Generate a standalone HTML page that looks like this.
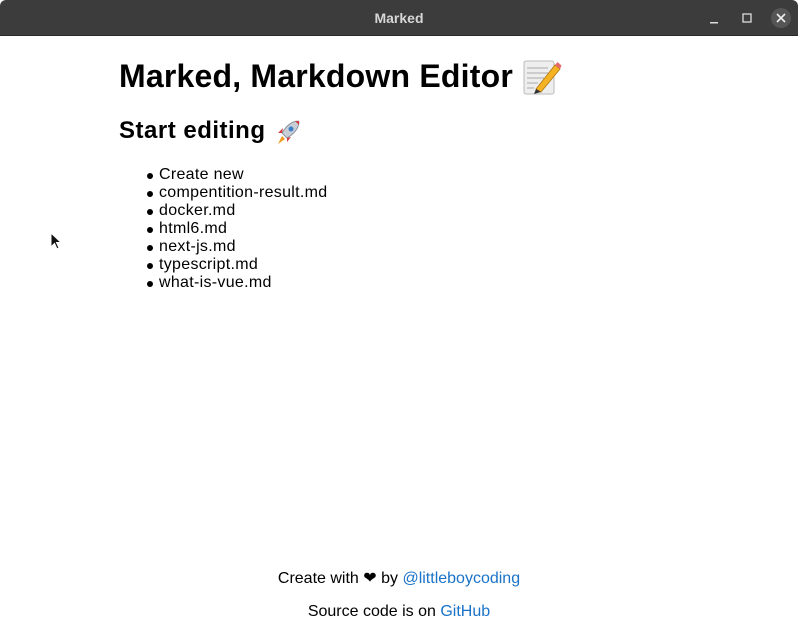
<!DOCTYPE html>
<html><head><meta charset="utf-8"><style>
*{margin:0;padding:0;box-sizing:border-box}
html,body{width:798px;height:636px;overflow:hidden;background:#fff;font-family:"Liberation Sans",sans-serif;color:#000}
.bar{position:absolute;left:0;top:0;width:798px;height:36px;background:#3c3c3c;border-bottom:1px solid #2a2a2a;border-radius:6px 6px 0 0}
.bar .t{position:absolute;left:0;right:0;top:10px;text-align:center;color:#d6d6d6;font-size:14px;font-weight:bold}
.a{position:absolute;white-space:nowrap}
h1{font-size:32px;font-weight:bold;letter-spacing:0.2px}
h2{font-size:24px;font-weight:bold;letter-spacing:0.5px}
ul{list-style:none}
li{font-size:16px;line-height:18px;position:relative;letter-spacing:0.3px}
li:before{content:"";position:absolute;left:-12px;top:7px;width:6px;height:6px;border-radius:50%;background:#000}
.f{position:absolute;left:0;width:798px;text-align:center;font-size:16px}
a{color:#1a73c8;text-decoration:none}
</style></head><body>
<div class="bar"><div class="t">Marked</div>
<svg style="position:absolute;left:700px;top:8px" width="98" height="22">
<rect x="10" y="14" width="8" height="1.5" fill="#ddd"/>
<rect x="43" y="6" width="8" height="8" fill="none" stroke="#ddd" stroke-width="1.3"/>
<circle cx="81" cy="10" r="10" fill="#555"/>
<path d="M77 6L85 14M85 6L77 14" stroke="#eee" stroke-width="1.6"/>
</svg></div>
<div class="a" style="left:119px;top:58px"><h1>Marked, Markdown Editor</h1></div>
<svg class="a" style="left:522px;top:59px" width="40" height="36" viewBox="0 0 40 36">
<rect x="2" y="2" width="30" height="33" rx="2" fill="#eee" stroke="#bbb"/>
<g stroke="#aaa" stroke-width="1"><line x1="5" y1="9" x2="26" y2="9"/><line x1="5" y1="14" x2="26" y2="14"/><line x1="5" y1="19" x2="22" y2="19"/><line x1="5" y1="24" x2="16" y2="24"/><line x1="5" y1="29" x2="12" y2="29"/></g>
<path d="M14 30L33 6L38 10L19 33Z" fill="#f5b324" stroke="#b07810" stroke-width="0.8"/>
<path d="M33 6L35.5 3L39.5 6.5L38 10Z" fill="#e86a6a"/>
<path d="M14 30L19 33L12 35Z" fill="#333"/>
</svg>
<div class="a" style="left:119px;top:117px"><h2>Start editing</h2></div>
<svg class="a" style="left:274px;top:119px" width="28" height="26" viewBox="0 0 28 26">
<path d="M24 2C18 2 12 7 8 14L13 19C20 15 25 9 25 3Z" fill="#c8ced6" stroke="#7a8592" stroke-width="0.8"/>
<circle cx="17" cy="10" r="2.5" fill="#3b7ec8"/>
<path d="M21 2L25 2L25 6Z" fill="#d63b3b"/>
<path d="M8 14L4 14L9 9Z M13 19L13 23L17 18Z" fill="#d63b3b"/>
<path d="M8 17L11 20L4 25Z" fill="#f59a1c"/>
</svg>
<ul class="a" style="left:159px;top:166px">
<li>Create new</li><li>compentition-result.md</li><li>docker.md</li><li>html6.md</li><li>next-js.md</li><li>typescript.md</li><li>what-is-vue.md</li>
</ul>
<svg class="a" style="left:50px;top:232px" width="12" height="18"><path d="M1 1L1 15L4.5 11.5L7 17L9 16L6.5 10.5L11 10.5Z" fill="#111" stroke="#fff" stroke-width="1"/></svg>
<div class="f" style="top:568px">Create with ❤ by <a>@littleboycoding</a></div>
<div class="f" style="top:603px">Source code is on <a>GitHub</a></div>
</body></html>
